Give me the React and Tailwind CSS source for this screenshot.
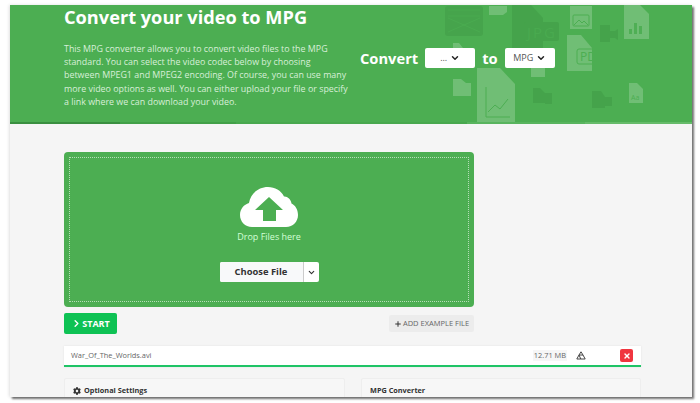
import React from 'react';
import { ChevronDown, Plus, X, ChevronRight } from 'lucide-react';
import { FaCog } from 'react-icons/fa';

const FONT = { fontFamily: '"Open Sans", sans-serif' };

// faded file shapes behind the converter select
const HeaderArt = () => (
    <svg className="absolute left-0 top-0" width="682" height="119" viewBox="0 0 682 119">
        {/* dark ones */}
        <g fill="#3f9a45" opacity="0.5">
            <rect x="435" y="1" width="38" height="30" rx="3" />
            <path d="M502 0h19l12 13v45h-31z" />
            <rect x="514" y="17" width="35" height="19" rx="2" />
            <path d="M590 20h10v6h5l3-2v11l-3-2h-5v4h-10z" />
            <path d="M523 83h7l5 5h7v11h-7v-1h-12z" />
            <path d="M582 86h9l4 6h7v9h-7v2h-13z" />
        </g>
        <g fill="none" stroke="#4cae52" strokeWidth="0.8" opacity="0.8">
            <path d="M438 5h32M438 11h32M438 27l32-14M470 27l-32-14" />
        </g>
        <text x="517" y="33" fontSize="15" fill="#4cae52" opacity="0.7" textLength="28">JPG</text>
        {/* light ones */}
        <g fill="#ffffff" opacity="0.2">
            <path d="M479 1h18v6l-4 3h-14z" />
            <path d="M443 38h6l4 5v5h-10z" />
            <path d="M560 1h22v23h-22z" />
            <path d="M614 0h16l9 9v25h-25z" />
            <path d="M557 30h14l11 13v23h-25z" />
            <path d="M521 63h14v9h-14z" />
            <path d="M467 63h23l15 16v39h-38z" />
            <path d="M443 74h8l5 4h5v13h-18z" />
            <path d="M619 78h8l6 6v14h-14z" />
        </g>
        <g fill="none" stroke="#4cae52" strokeWidth="1">
            <path d="M476 82v30h24" />
            <path d="M478 107l7-7 5 4 8-10" />
            <rect x="567" y="44" width="28" height="15" rx="2" />
            <rect x="563" y="10" width="16" height="11" rx="1" />
            <path d="M564 20l5-5 3 3 2-2 4 4" />
        </g>
        <text x="570" y="56" fontSize="12" fill="#4cae52" textLength="22">PDF</text>
        <text x="621" y="95" fontSize="7" fill="#4cae52">Aa</text>
        <g fill="#4cae52" opacity="0.9">
            <rect x="619" y="24" width="3" height="5" />
            <rect x="624" y="18" width="3" height="11" />
            <rect x="629" y="21" width="3" height="8" />
        </g>
    </svg>
);

const Select = ({ label, className }) => (
    <div className={`flex h-[20px] items-center justify-center gap-[3px] rounded-[2px] bg-white text-[9px] font-normal text-[#555] ${className}`}>
        <span>{label}</span>
        <ChevronDown size={10} strokeWidth={3.500} className="text-[#222]" />
    </div>
);

const CloudIcon = () => (
    <svg width="58" height="40" viewBox="0 0 58 40">
        <path
            fill="#fff"
            d="M12 40C5 40 0 34.500 0 28c0-6 4-10.500 9-12C10.500 7 18 0 28 0c7 0 13 3.500 16 9.500 3-.5 7 2.500 7.500 7C55 18 58 22.500 58 28c0 6.500-5 12-12 12z"
        />
        <path fill="#4cae52" d="M23 34V23h-8l14-13 14 13h-7v11z" />
    </svg>
);

const App = () => {
    return (
        <div style={FONT} className="h-[403px] w-[700px] overflow-hidden bg-white pl-[10px] pt-[5px]">
            <div className="h-[392px] w-[682px] overflow-hidden bg-[#f5f5f5] shadow-[2px_2px_2px_rgba(0,0,0,0.55),-1px_0_3px_rgba(0,0,0,0.12)]">
                {/* Header */}
                <div className="relative flex h-[119px] bg-[#4cae52] pl-[54px] text-white">
                    <HeaderArt />
                    <div className="relative w-[286px] shrink-0">
                        <h1 className="text-[18.200px] font-bold leading-[24px]">Convert your video to MPG</h1>
                        <p className="mt-[13px] w-[284px] text-[8.900px] leading-[13.200px] text-[#d8efd9]">
                            This MPG converter allows you to convert video files to the MPG standard. You can select the video codec below by choosing between MPEG1 and MPEG2 encoding. Of course, you can use many more video options as well. You can either upload your file or specify a link where we can download your video.
                        </p>
                    </div>
                    <div className="relative ml-[10px] mt-[43px] flex h-[20px] items-center self-start text-[14.700px] font-bold">
                        <span>Convert</span>
                        <Select label="..." className="ml-[7px] w-[50px]" />
                        <span className="mx-[7px]">to</span>
                        <Select label="MPG" className="w-[50px]" />
                    </div>
                    {/* dark strip along the bottom edge */}
                    <div className="absolute bottom-0 left-0 flex h-[2px] w-full">
                        <div className="w-[110px] bg-[#3a8f40]" />
                        <div className="w-[116px] bg-[#42a048]" />
                        <div className="w-[231px] bg-[#48a84e]" />
                        <div className="w-[118px] bg-[#58b45e]" />
                        <div className="flex-1 bg-[#66bb6a]" />
                    </div>
                </div>

                {/* Upload area */}
                <div className="pl-[54px] pt-[28px]">
                    <div className="w-[410px] rounded-[4px] bg-[#4cae52] p-[5px]">
                        <div className="flex h-[145px] flex-col items-center border border-dotted border-[#b5ddb7] pt-[29px]">
                            <CloudIcon />
                            <div className="mt-[3px] text-[9px] leading-[14px] text-[#d4ffd6]">Drop Files here</div>
                            <div className="mt-[18px] flex h-[20px] rounded-[2px] bg-white text-[#333]">
                                <div className="flex w-[83px] items-center justify-center rounded-l-[2px] bg-[#f8f9fa] text-[9.400px] font-bold">Choose File</div>
                                <div className="flex w-[16px] items-center justify-center border-l border-[#ccc]">
                                    <ChevronDown size={9} strokeWidth={3} />
                                </div>
                            </div>
                        </div>
                    </div>

                    <div className="mt-[6px] flex w-[410px] items-center justify-between">
                        <button className="flex h-[21px] w-[53px] items-center justify-center rounded-[2px] bg-[#0ec254] text-[9px] font-bold text-white">
                            <ChevronRight size={11} strokeWidth={3} />
                            START
                        </button>
                        <button className="flex h-[17px] w-[85px] items-center justify-center gap-[1px] rounded-[2px] bg-[#ececec] text-[7.500px] font-normal text-[#666]">
                            <Plus size={8} strokeWidth={3} className="text-[#333]" />
                            ADD EXAMPLE FILE
                        </button>
                    </div>

                    {/* File row */}
                    <div className="mt-[12px] flex h-[21px] w-[577px] items-center border-b-2 border-[#1fc466] bg-white pl-[7px] pr-[8px] text-[7.400px] text-[#666] shadow-[0_0_2px_rgba(0,0,0,0.08)]">
                        <span className="flex-1">War_Of_The_Worlds.avi</span>
                        <span className="bg-[#f6f6f6] px-[1px] text-[7.400px]">12.71 MB</span>
                        <svg className="ml-[9px]" width="10" height="9" viewBox="0 0 10 9" fill="none" stroke="#444" strokeWidth="1">
                            <path d="M5 .8L7 4H3zM3 4L.8 8h4zM7 4l2.200 4h-4.400" />
                        </svg>
                        <div className="ml-[34px] flex h-[13px] w-[13px] items-center justify-center rounded-[2px] bg-[#f0353f]">
                            <X size={8} strokeWidth={4} className="text-white" />
                        </div>
                    </div>

                    {/* Bottom cards, cut off by the window */}
                    <div className="mt-[11px] flex w-[577px] gap-[16px] text-[7.300px] font-bold text-[#333]">
                        <div className="flex h-[30px] w-[281px] items-start gap-[3px] rounded-[2px] border border-[#eeeeee] bg-[#f7f7f7] pl-[8px] pt-[6px]">
                            <FaCog size={8} className="mt-[2px]" />
                            Optional Settings
                        </div>
                        <div className="h-[30px] flex-1 rounded-[2px] border border-[#eeeeee] bg-[#f7f7f7] pl-[8px] pt-[6px]">
                            MPG Converter
                        </div>
                    </div>
                </div>
            </div>
        </div>
    );
};

export default App;
